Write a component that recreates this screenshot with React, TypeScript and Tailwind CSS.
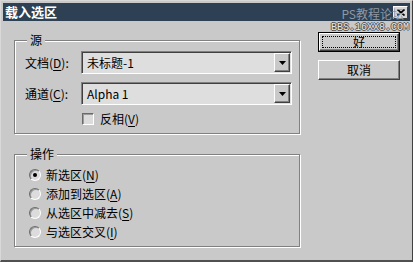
import React from "react";

const Raised = "border border-t-white border-l-white border-r-[#404040] border-b-[#404040] shadow-[inset_-1px_-1px_0_#808080]";
const Sunken = "border border-t-[#808080] border-l-[#808080] border-r-white border-b-white shadow-[inset_1px_1px_0_#404040]";

function Combo({ value }: { value: string }) {
  return (
    <div className={`w-[211px] h-[23px] bg-[#dedede] flex items-center pr-[1px] ${Sunken}`}>
      <span className="flex-1 pl-[5px] text-[12px] leading-[14px] text-black">{value}</span>
      <div className={`w-[16px] h-[19px] bg-[#c9c9c9] flex items-center justify-center ${Raised}`}>
        <svg width="7" height="4" viewBox="0 0 7 4">
          <path d="M0 0H7L3.5 4Z" fill="#000" />
        </svg>
      </div>
    </div>
  );
}

function Radio({ checked, label, m }: { checked?: boolean; label: string; m: string }) {
  return (
    <div className="h-[19px] flex items-center pl-[14px]">
      <div className="w-[12px] h-[12px] rounded-full bg-[#dcdcdc] border border-t-[#6a6a6a] border-l-[#6a6a6a] border-r-white border-b-white flex items-center justify-center shadow-[inset_1px_1px_0_#9a9a9a]">
        {checked && <div className="w-[4px] h-[4px] rounded-full bg-black" />}
      </div>
      <span className="ml-[5px] text-[12px] leading-[14px] text-black">
        {label}(<span className="underline underline-offset-2">{m}</span>)
      </span>
    </div>
  );
}

export default function App() {
  return (
    <div className="relative w-[413px] h-[262px] bg-[#c9c9c9] border-t border-l border-t-[#d8d8d8] border-l-[#d8d8d8] border-r border-r-[#404040] border-b-2 border-b-[#505050] pt-[2px] pl-[2px] pr-[2px] font-['Noto_Sans_CJK_SC','Noto_Sans',sans-serif] overflow-hidden">
      {/* Title bar */}
      <div className="h-[18px] bg-[#2d4054] flex items-center pl-[2px] pr-[2px]">
        <span className="text-white font-bold text-[13px] leading-[16px]">载入选区</span>
        <div className="ml-auto w-[15px] h-[13px] bg-[#d6d6d6] border border-t-white border-l-white border-r-[#404040] border-b-[#404040] flex items-center justify-center">
          <svg width="8" height="7" viewBox="0 0 8 7">
            <path d="M0.5 0.5L7.5 6.5M7.5 0.5L0.5 6.5" stroke="#000" strokeWidth="1.6" />
          </svg>
        </div>
      </div>

      {/* Watermark */}
      <div className="absolute z-10 right-[3px] top-[5px] flex flex-col items-end pointer-events-none whitespace-nowrap">
        <span className="mr-[5px] text-[12px] leading-[15px] text-[#8e98a4] whitespace-nowrap">PS教程论坛</span>
        <span className="mt-[1px] text-[10px] leading-[11px] font-['Liberation_Mono',monospace] text-[#e8e8e8] whitespace-nowrap [text-shadow:1px_0_#505050,-1px_0_#505050,0_1px_#505050,0_-1px_#505050]">
          BBS.16XX8.COM
        </span>
      </div>

      {/* Content */}
      <div className="flex pl-[11px]">
        <div className="flex flex-col">
          <fieldset className="mt-[12px] w-[286px] h-[101px] border border-[#808080] shadow-[1px_1px_0_#fff,inset_1px_1px_0_#fff]">
            <legend className="ml-[12px] px-[3px] bg-[#c9c9c9] text-[12px] leading-[14px] text-black">源</legend>
            <div className="pl-[10px]">
              <div className="mt-[4px] flex items-center">
                <span className="w-[56px] text-[12px] leading-[14px] text-black">
                  文档(<span className="underline underline-offset-2">D</span>):
                </span>
                <Combo value="未标题-1" />
              </div>
              <div className="mt-[8px] flex items-center">
                <span className="w-[56px] text-[12px] leading-[14px] text-black">
                  通道(<span className="underline underline-offset-2">C</span>):
                </span>
                <Combo value="Alpha 1" />
              </div>
              <div className="mt-[7px] ml-[57px] flex items-center">
                <div className="w-[12px] h-[12px] bg-[#dcdcdc] border border-t-[#6a6a6a] border-l-[#6a6a6a] border-r-white border-b-white shadow-[inset_1px_1px_0_#9a9a9a]" />
                <span className="ml-[6px] text-[12px] leading-[14px] text-black">
                  反相(<span className="underline underline-offset-2">V</span>)
                </span>
              </div>
            </div>
          </fieldset>

          <fieldset className="mt-[13px] w-[286px] h-[100px] border border-[#808080] shadow-[1px_1px_0_#fff,inset_1px_1px_0_#fff]">
            <legend className="ml-[12px] px-[3px] bg-[#c9c9c9] text-[12px] leading-[14px] text-black">操作</legend>
            <div className="mt-[4px] flex flex-col">
              <Radio checked label="新选区" m="N" />
              <Radio label="添加到选区" m="A" />
              <Radio label="从选区中减去" m="S" />
              <Radio label="与选区交叉" m="I" />
            </div>
          </fieldset>
        </div>

        <div className="ml-[18px] mt-[11px] flex flex-col gap-[8px]">
          <div className="w-[82px] h-[20px] border border-black">
            <div className={`w-full h-full bg-[#cbcbcb] p-[2px] ${Raised}`}>
              <div className="w-full h-full border border-dotted border-black flex items-center justify-center text-[12px] leading-[14px] text-black">
                好
              </div>
            </div>
          </div>
          <div className={`w-[82px] h-[20px] bg-[#cbcbcb] flex items-center justify-center text-[12px] leading-[14px] text-black ${Raised}`}>
            取消
          </div>
        </div>
      </div>
    </div>
  );
}
